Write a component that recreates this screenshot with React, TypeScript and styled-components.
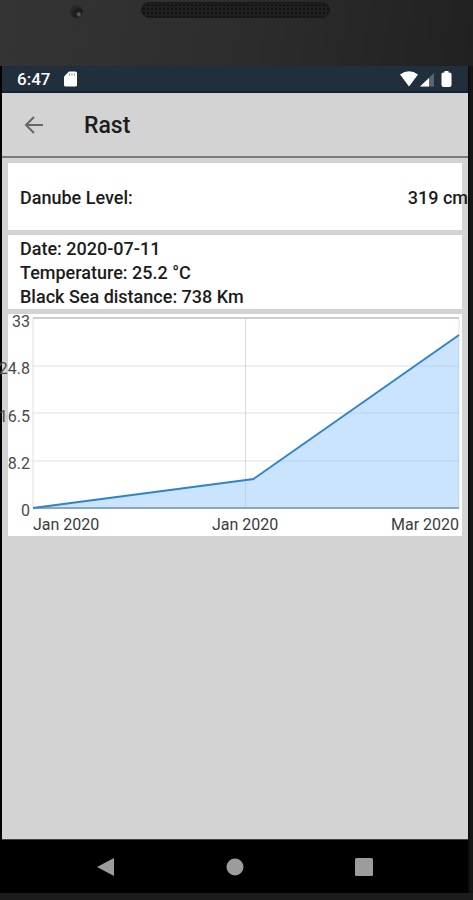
import React from "react";
import styled, { createGlobalStyle } from "styled-components";

const GlobalStyle = createGlobalStyle`
  *, *::before, *::after { box-sizing: border-box; }
  body { margin: 0; background: #1c1c1c; font-family: Roboto, "Liberation Sans", sans-serif; }
`;

const Device = styled.div`
  min-height: 100vh;
  display: flex;
  flex-direction: column;
  background: #1c1c1c;
  overflow: hidden;
`;

const Bezel = styled.div`
  display: grid;
  grid-template-columns: 3fr 4fr 3fr;
  height: 66px;
  padding: 2px 2px 0 0;
  background: linear-gradient(100deg, #343434 0%, #2e2e2e 45%, #212121 100%);
`;

const Camera = styled.div`
  justify-self: center;
  width: 13px;
  height: 13px;
  margin: 3px 0 0 12px;
  border-radius: 50%;
  background: radial-gradient(circle at 68% 72%, #6b5055 0 1px, #1c1c1c 3px 5px, #262626 7px);
`;

const Speaker = styled.div`
  height: 16px;
  border-radius: 8px;
  border: 1px solid #191919;
  background-color: #1f1f1f;
  background-image: radial-gradient(circle, #121212 1px, transparent 1px);
  background-size: 4px 4px;
`;

const Body = styled.div`
  flex: 1;
  display: flex;
  padding: 0 5px 0 2px;
  margin-bottom: 7px;
  background: linear-gradient(90deg, #000 0 2px, #0c0c0c 2px calc(100% - 4px), #161616 calc(100% - 3px));
`;

const Screen = styled.div`
  flex: 1;
  min-width: 0;
  display: flex;
  flex-direction: column;
  background: #d3d3d3;
`;

const StatusBar = styled.div`
  display: flex;
  align-items: center;
  height: 27px;
  padding: 0 15px;
  background: #212e3b;
  border-bottom: 2px solid #132334;
  color: #fff;
`;

const Clock = styled.span`
  font-size: 17px;
  font-weight: 500;
  line-height: 24px;
`;

const SdCard = styled.svg`
  margin-left: 14px;
`;

const StatusIcons = styled.svg`
  margin-left: auto;
`;

const AppBar = styled.header`
  display: flex;
  align-items: center;
  gap: 37px;
  height: 65px;
  padding: 0 19px;
  border-bottom: 2px solid #777b7a;
`;

const IconButton = styled.button`
  display: flex;
  padding: 0;
  border: 0;
  background: none;
  cursor: pointer;
`;

const Title = styled.h1`
  margin: 0;
  padding-top: 2px;
  font-size: 23px;
  font-weight: 500;
  line-height: 28px;
  color: #1c1c1c;
`;

const Content = styled.main`
  flex: 1;
  display: flex;
  flex-direction: column;
  gap: 5px;
  padding: 5px 6px;
`;

const Card = styled.section`
  padding: 2px 12px 0;
  background: #fff;
  color: #1c1c1c;
  font-size: 18px;
  font-weight: 500;
  line-height: 24px;
`;

const LevelCard = styled(Card)`
  display: flex;
  align-items: center;
  justify-content: space-between;
  height: 67px;
  padding-right: 0;
`;

const LevelValue = styled.span`
  margin-right: -6px;
`;

const Line = styled.p`
  margin: 0;
`;

const ChartCard = styled.figure`
  display: grid;
  grid-template-columns: 22px 1fr;
  column-gap: 3px;
  margin: 0;
  padding: 4px 3px 3px 0;
  background: #fff;
  color: #4a4a4a;
  font-size: 16px;
  line-height: 16px;
`;

const YAxis = styled.div`
  display: flex;
  flex-direction: column;
  justify-content: space-between;
  align-items: flex-end;
  margin: -4px 0 -11px;
`;

const Plot = styled.svg`
  display: block;
  width: 100%;
  height: 190px;
  overflow: visible;
`;

const XAxis = styled.figcaption`
  grid-column: 2;
  display: flex;
  justify-content: space-between;
  padding-top: 9px;
  color: #3c3c3c;
`;

const NavBar = styled.nav`
  display: grid;
  grid-template-columns: repeat(3, 1fr);
  place-items: center;
  height: 54px;
  padding: 0 39px;
  background: #000;
  border-top: 1px solid #444;
`;

const W = 427;
const H = 190;
const yLabels = ["33", "24.8", "16.5", "8.2", "0"];
const xLabels = ["Jan 2020", "Jan 2020", "Mar 2020"];
const points = [
  [0, 190],
  [206, 163],
  [221, 161],
  [427, 17],
];
const line = points.map(([x, y]) => `${x},${y}`).join(" ");

function Chart() {
  return (
    <ChartCard aria-label="Danube level history">
      <YAxis>
        {yLabels.map((label) => (
          <span key={label}>{label}</span>
        ))}
      </YAxis>
      <Plot viewBox={`0 0 ${W} ${H}`} preserveAspectRatio="none" aria-hidden="true">
        <g stroke="#000" strokeOpacity="0.13" fill="none">
          {[48, 95, 143].map((y) => (
            <path key={y} d={`M0 ${y}H${W}`} vectorEffect="non-scaling-stroke" />
          ))}
          {[0, 213, W].map((x) => (
            <path key={x} d={`M${x} 0V${H}`} vectorEffect="non-scaling-stroke" />
          ))}
        </g>
        <path d={`M0 0H${W}`} stroke="#bdbdbd" strokeWidth="1.5" vectorEffect="non-scaling-stroke" />
        <polygon points={`${line} ${W},${H} 0,${H}`} fill="#99ccff" fillOpacity="0.52" />
        <path d={`M0 ${H}H${W}`} stroke="#8ba9b4" strokeWidth="2" vectorEffect="non-scaling-stroke" />
        <polyline points={line} fill="none" stroke="#2f83cc" strokeWidth="2" vectorEffect="non-scaling-stroke" />
      </Plot>
      <XAxis>
        {xLabels.map((label, i) => (
          <span key={i}>{label}</span>
        ))}
      </XAxis>
    </ChartCard>
  );
}

export default function App() {
  return (
    <>
      <GlobalStyle />
      <Device>
        <Bezel>
          <Camera />
          <Speaker />
        </Bezel>
        <Body>
          <Screen>
            <StatusBar>
              <Clock>6:47</Clock>
              <SdCard width="13" height="16" viewBox="0 0 13 16" aria-hidden="true">
                <path d="M5 .5h6.5Q13 .5 13 2v12q0 1.500-1.500 1.500h-10Q0 15.500 0 14V5.500z" fill="#fff" />
                <path d="M5.500 2.500v2M8 2.500v2M10.500 2.500v2" stroke="#8a939b" />
              </SdCard>
              <StatusIcons width="53" height="18" viewBox="0 0 53 18" aria-hidden="true">
                <path d="M0 4.500Q9-2 18 4.500L9 16.500z" fill="#fff" />
                <path d="M34 3v13.500H20z" fill="#5a6571" />
                <path d="M29 8v8.500h-9z" fill="#fff" />
                <path d="M44.500 1h4v1.500h1Q51.500 2.500 51.500 4v11q0 2-2 2h-6q-2 0-2-2V4q0-1.500 2-1.500h1z" fill="#fff" />
              </StatusIcons>
            </StatusBar>
            <AppBar>
              <IconButton type="button" aria-label="Back">
                <svg width="26" height="26" viewBox="0 0 26 26" fill="none" stroke="#666" strokeWidth="2">
                  <path d="M22 13H5M13 5L5 13l8 8" />
                </svg>
              </IconButton>
              <Title>Rast</Title>
            </AppBar>
            <Content>
              <LevelCard>
                <span>Danube Level:</span>
                <LevelValue>319 cm</LevelValue>
              </LevelCard>
              <Card>
                <Line>Date: 2020-07-11</Line>
                <Line>Temperature: 25.2 °C</Line>
                <Line>Black Sea distance: 738 Km</Line>
              </Card>
              <Chart />
            </Content>
            <NavBar>
              <IconButton type="button" aria-label="Back">
                <svg width="18" height="20" viewBox="0 0 18 20">
                  <path d="M17 1v18L0 10z" fill="#9c9c9c" />
                </svg>
              </IconButton>
              <IconButton type="button" aria-label="Home">
                <svg width="18" height="18" viewBox="0 0 18 18">
                  <circle cx="9" cy="9" r="8.500" fill="#9c9c9c" />
                </svg>
              </IconButton>
              <IconButton type="button" aria-label="Recent apps">
                <svg width="18" height="18" viewBox="0 0 18 18">
                  <rect width="18" height="18" rx="1.500" fill="#9c9c9c" />
                </svg>
              </IconButton>
            </NavBar>
          </Screen>
        </Body>
      </Device>
    </>
  );
}
